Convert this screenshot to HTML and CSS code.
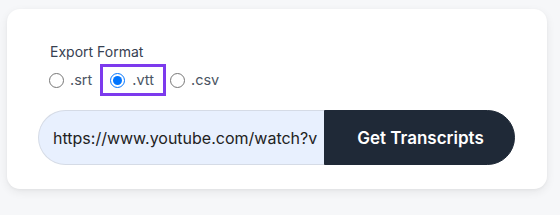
FILE: index.html
```
<!DOCTYPE html>
<html>
<head>
<meta charset="utf-8">
<link rel="stylesheet" href="styles.css">
</head>
<body>
<div class="card">
  <div class="format">
    <div class="format-label">Export Format</div>
    <div class="options">
      <label class="option"><input type="radio" name="fmt"><span>.srt</span></label>
      <label class="option selected"><input type="radio" name="fmt" checked><span>.vtt</span></label>
      <label class="option"><input type="radio" name="fmt"><span>.csv</span></label>
    </div>
  </div>
  <div class="row">
    <input class="url" type="text" value="https://www.youtube.com/watch?v">
    <button class="go">Get Transcripts</button>
  </div>
</div>
</body>
</html>
```
FILE: styles.css
```
html, body {
  margin: 0;
  padding: 0;
}
body {
  background: #f6f7f9;
  font-family: Inter, "Noto Sans", sans-serif;
  width: 560px;
  height: 215px;
  overflow: hidden;
}
.card {
  box-sizing: border-box;
  margin: 9px 0 0 7px;
  width: 540px;
  height: 180px;
  background: #fff;
  border-radius: 13px;
  box-shadow: 0 3px 10px rgba(0, 0, 0, 0.07), 0 1px 3px rgba(0, 0, 0, 0.04);
  padding: 34px 32px 0 31px;
}
.format {
  padding-left: 12px;
}
.format-label {
  font-size: 14px;
  color: #374151;
  line-height: 18px;
}
.options {
  display: flex;
  align-items: center;
  margin-top: 3px;
  margin-left: -1px;
}
.option {
  display: flex;
  align-items: center;
  gap: 6px;
  font-size: 14.5px;
  line-height: 18px;
  color: #4b5563;
}
.option input {
  width: 15px;
  height: 15px;
  margin: 0;
  accent-color: #0075ff;
}
.option + .option {
  margin-left: 4px;
}
.option.selected {
  margin-left: 8px;
  gap: 7px;
  border: 3px solid #7c3aed;
  padding: 4px 9px 4px 7px;
}
.row {
  display: flex;
  margin-top: 14px;
  height: 55px;
}
.url {
  box-sizing: border-box;
  width: 286px;
  height: 55px;
  margin: 0;
  border: 1px solid #d5dbe6;
  border-right: none;
  border-radius: 28px 0 0 28px;
  background: #e8f0fe;
  padding: 0 0 0 14px;
  font-family: Inter, "Noto Sans", sans-serif;
  font-size: 16px;
  color: #222;
  outline: none;
}
.go {
  box-sizing: border-box;
  width: 191px;
  height: 55px;
  margin: 0;
  border: 1px solid #1f2937;
  border-radius: 0 28px 28px 0;
  background: #1f2937;
  color: #fff;
  font-family: Inter, "Noto Sans", sans-serif;
  font-size: 17px;
  font-weight: 600;
  padding: 0 0 0 2px;
}
```
